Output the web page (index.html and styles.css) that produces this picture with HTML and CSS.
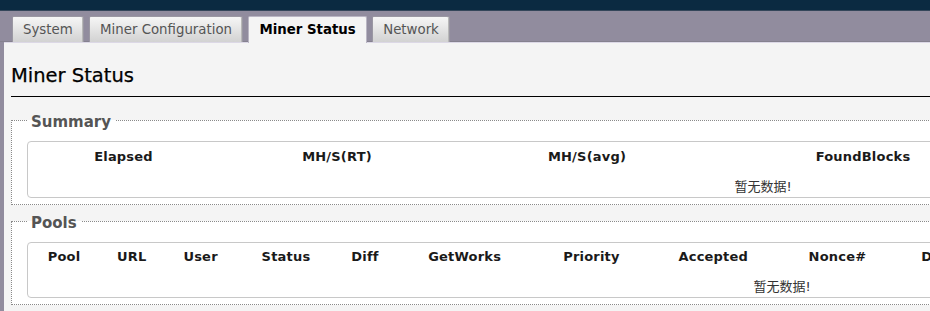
FILE: index.html
```html
<!DOCTYPE html>
<html lang="zh-CN">
<head>
<meta charset="utf-8">
<title>Miner Status</title>
<link rel="stylesheet" href="styles.css">
</head>
<body>
<div class="topbar"></div>
<div class="tabbar">
  <ul class="tabs">
    <li class="tab">System</li>
    <li class="tab">Miner Configuration</li>
    <li class="tab active">Miner Status</li>
    <li class="tab">Network</li>
  </ul>
</div>
<div class="main">
  <h2 class="title">Miner Status</h2>
  <fieldset class="section section-summary">
    <legend class="section-legend">Summary</legend>
    <div class="tbl-wrap">
      <table class="tbl tbl-summary">
        <colgroup>
          <col class="c-s1"><col class="c-s2"><col class="c-s3"><col class="c-s4"><col class="c-s5">
        </colgroup>
        <thead>
          <tr class="head-row"><th>Elapsed</th><th>MH/S(RT)</th><th>MH/S(avg)</th><th>FoundBlocks</th><th></th></tr>
        </thead>
        <tbody>
          <tr class="data-row"><td class="empty" colspan="5">暂无数据!</td></tr>
        </tbody>
      </table>
    </div>
  </fieldset>
  <fieldset class="section section-pools">
    <legend class="section-legend">Pools</legend>
    <div class="tbl-wrap">
      <table class="tbl tbl-pools">
        <colgroup>
          <col class="c-p1"><col class="c-p2"><col class="c-p3"><col class="c-p4"><col class="c-p5"><col class="c-p6"><col class="c-p7"><col class="c-p8"><col class="c-p9"><col class="c-p10"><col class="c-p11">
        </colgroup>
        <thead>
          <tr class="head-row pools-head"><th>Pool</th><th>URL</th><th>User</th><th>Status</th><th>Diff</th><th>GetWorks</th><th>Priority</th><th>Accepted</th><th>Nonce#</th><th>DiffA</th><th></th></tr>
        </thead>
        <tbody>
          <tr class="data-row pools-data"><td class="empty" colspan="11">暂无数据!</td></tr>
        </tbody>
      </table>
    </div>
  </fieldset>
</div>
</body>
</html>
```
FILE: styles.css
```css
html {
  overflow: hidden;
}
body {
  margin: 0;
  background: #918c9e;
  font-family: "DejaVu Sans", Verdana, "Noto Sans CJK SC", sans-serif;
  color: #111;
  width: 1600px;
  min-height: 311px;
}
.topbar {
  height: 10px;
  background: #0b2a41;
  border-bottom: 1px solid #34465a;
}
.tabbar {
  height: 31px;
  box-sizing: border-box;
  padding: 5px 0 0 12px;
  background: #918c9e;
  box-shadow: inset 0 -1px 0 #85818f;
}
.tabs {
  list-style: none;
  margin: 0;
  padding: 0;
  display: flex;
  align-items: flex-end;
  gap: 5.4px;
  height: 26px;
}
.tab {
  height: 25px;
  line-height: 26px;
  padding: 0 10px;
  border: 1px solid #9a97a2;
  border-bottom: 0;
  border-radius: 2px 2px 0 0;
  background: linear-gradient(#f6f6f6, #d2d2d2);
  color: #555;
  font-size: 13.33px;
  white-space: nowrap;
  box-shadow: inset -1px 0 0 #b8b8b8;
}
.tab.active {
  background: #f4f4f4;
  color: #000;
  font-weight: bold;
  border-color: #b9b5c3;
  box-shadow: none;
  position: relative;
  z-index: 1;
  height: 26px;
  margin-bottom: -1px;
}
.main {
  margin-left: 4px;
  background: #f4f4f4;
  border-top: 1px solid #dcd8e6;
  padding: 21px 7px 20px 7px;
  min-height: 300px;
}
.title {
  margin: 0;
  font-size: 19.5px;
  line-height: 23px;
  font-weight: normal;
  color: #000;
  padding-bottom: 9px;
  border-bottom: 1px solid #000;
  -webkit-text-stroke: 0.25px #000;
}
.section {
  margin: 12px 0 0 0;
  padding: 10px 15px 6px 15px;
  border: 1px dotted #8a8a8a;
  background: #fff;
  min-width: 0;
}
.section-pools {
  margin-top: 5px;
}
.section-legend {
  padding: 4px 4px 0 4px;
  font-size: 15px;
  line-height: 18px;
  font-weight: bold;
  color: #555;
}
.tbl-wrap {
  border: 1px solid #c8c8c8;
  border-radius: 4px;
  background: #fff;
}
.tbl {
  table-layout: fixed;
  border-collapse: collapse;
  border-spacing: 0;
}
.tbl-summary {
  width: 1470px;
}
.tbl-pools {
  width: 1508px;
}
.tbl th {
  font-size: 13px;
  font-weight: bold;
  color: #1a1a1a;
  text-align: center;
  padding: 0;
  white-space: nowrap;
  letter-spacing: 0.2px;
}
.head-row {
  height: 28px;
}
.data-row {
  height: 27px;
}
.pools-head {
  height: 27px;
}
.pools-data {
  height: 27px;
}
.tbl td.empty {
  text-align: center;
  font-size: 13px;
  color: #333;
  padding: 3px 0 0 0;
}
.c-s1 { width: 191px; }
.c-s2 { width: 236px; }
.c-s3 { width: 264px; }
.c-s4 { width: 288px; }
.c-s5 { width: 491px; }
.c-p1 { width: 72px; }
.c-p2 { width: 63.4px; }
.c-p3 { width: 74.4px; }
.c-p4 { width: 96.4px; }
.c-p5 { width: 61.6px; }
.c-p6 { width: 137.8px; }
.c-p7 { width: 115.8px; }
.c-p8 { width: 127.8px; }
.c-p9 { width: 120.6px; }
.c-p10 { width: 84.6px; }
.c-p11 { width: 553.6px; }
```
